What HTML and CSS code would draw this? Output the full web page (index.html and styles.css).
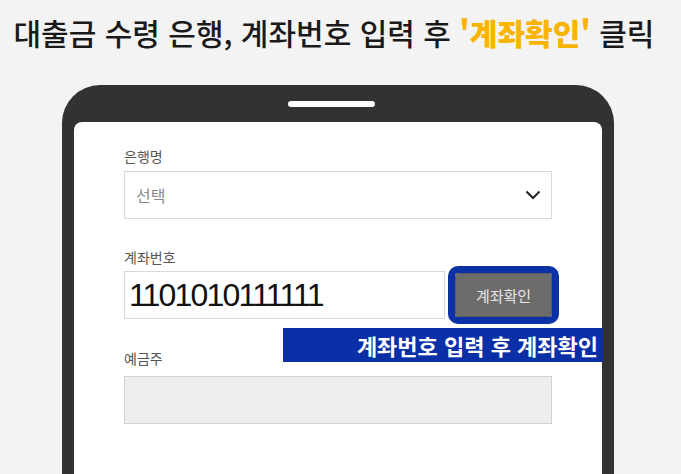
FILE: index.html
```html
<!DOCTYPE html>
<html lang="ko">
<head>
<meta charset="utf-8">
<title>계좌확인</title>
<link rel="stylesheet" href="styles.css">
</head>
<body>
<h1 class="title">대출금 수령 은행, 계좌번호 입력 후 <span class="hl">'계좌확인'</span> 클릭</h1>
<div class="phone">
  <div class="speaker"></div>
  <div class="screen">
    <div class="form">
      <div class="label label-bank">은행명</div>
      <div class="select">
        <span class="select-text">선택</span>
        <svg class="chev" width="16" height="10" viewBox="0 0 16 10"><polyline points="1.5,1.5 8,8 14.5,1.5" fill="none" stroke="#222" stroke-width="2"/></svg>
      </div>
      <div class="label label-acct">계좌번호</div>
      <div class="acct-row">
        <div class="input acct-input">1101010111111</div>
        <button class="btn">계좌확인</button>
      </div>
      <div class="label label-owner">예금주</div>
      <div class="input owner"></div>
    </div>
    <div class="banner">계좌번호 입력 후 계좌확인</div>
  </div>
</div>
</body>
</html>
```

FILE: styles.css
```css
html, body {
  margin: 0;
  padding: 0;
}
body {
  background: #f3f3f3;
  height: 474px;
  overflow: hidden;
  font-family: "Noto Sans CJK KR", "Noto Sans", sans-serif;
}
.title {
  margin: 0;
  padding: 14px 13px 0 0;
  height: 85px;
  box-sizing: border-box;
  text-align: center;
  font-size: 30px;
  line-height: 36px;
  font-weight: 500;
  color: #1a1a1a;
  letter-spacing: 0;
  white-space: nowrap;
}
.hl {
  color: #f8b400;
  font-weight: 900;
}
.phone {
  margin-left: 62px;
  width: 552px;
  height: 389px;
  box-sizing: border-box;
  background: #323232;
  border-radius: 38px 38px 0 0;
  padding: 16px 12px 0 12px;
}
.speaker {
  margin-left: 214px;
  width: 87px;
  height: 6px;
  border-radius: 3px;
  background: #ffffff;
  margin-bottom: 15px;
}
.screen {
  position: relative;
  background: #ffffff;
  border-radius: 8px 8px 0 0;
  height: 352px;
  padding: 24px 50px 0 50px;
  box-sizing: border-box;
}
.label {
  font-size: 14px;
  line-height: 20px;
  color: #555555;
}
.label-bank { margin-bottom: 5px; }
.label-acct { margin-top: 28px; margin-bottom: 4px; }
.label-owner { margin-top: 29px; margin-bottom: 8px; }
.select {
  height: 48px;
  box-sizing: border-box;
  border: 1px solid #d9d9d9;
  display: flex;
  align-items: center;
  justify-content: space-between;
  padding: 0 10px 0 11px;
}
.select-text {
  font-size: 16px;
  color: #8a8a8a;
}
.chev {
  display: block;
}
.acct-row {
  display: flex;
  align-items: center;
}
.input {
  height: 48px;
  box-sizing: border-box;
  border: 1px solid #d9d9d9;
}
.acct-input {
  width: 321px;
  padding-left: 4px;
  font-family: "Liberation Sans Narrow", "Liberation Sans", sans-serif;
  font-size: 32px;
  line-height: 46px;
  letter-spacing: -1.8px;
  color: #111111;
}
.btn {
  margin-left: 10px;
  width: 97px;
  height: 44px;
  border: 1px solid #5a5a5a;
  border-radius: 3px;
  background: #6c6c6c;
  color: #e6e6e6;
  font-family: "Noto Sans CJK KR", sans-serif;
  font-size: 15px;
  outline: 7px solid #0c31a6;
  padding: 0;
}
.owner {
  background: #eceef0;
  border-color: #cfd1d3;
}
.banner {
  position: absolute;
  left: 209px;
  top: 206px;
  width: 320px;
  height: 34px;
  background: #0a2fa6;
  color: #ffffff;
  font-size: 22px;
  font-weight: 700;
  line-height: 34px;
  text-align: right;
  padding-right: 5px;
  box-sizing: border-box;
}
```
